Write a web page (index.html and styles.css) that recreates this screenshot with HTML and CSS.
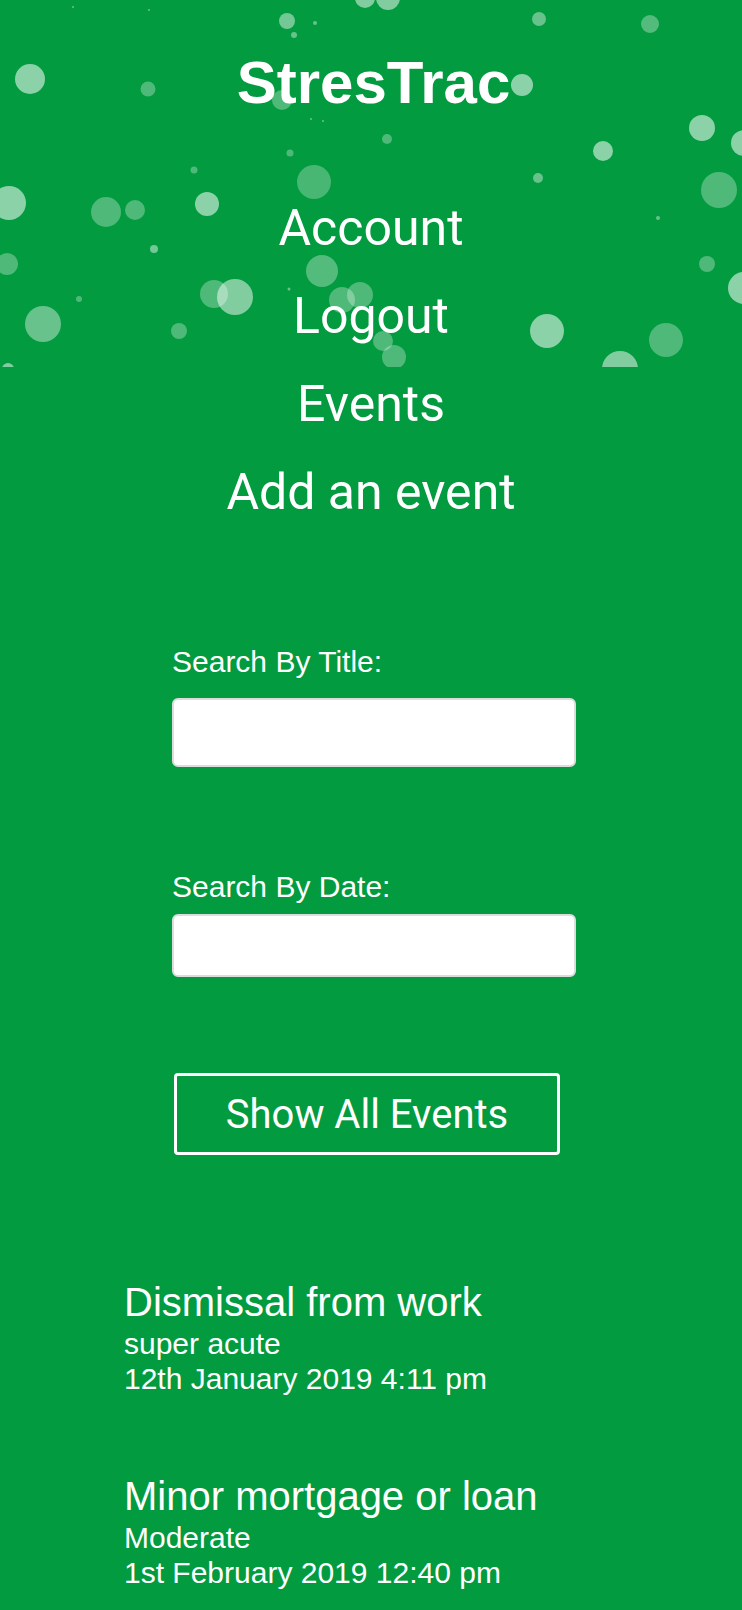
FILE: index.html
```html
<!DOCTYPE html>
<html lang="en">
<head>
<meta charset="utf-8">
<title>StresTrac</title>
<link rel="stylesheet" href="styles.css">
</head>
<body>
<header class="hero">
  <svg class="particles" width="742" height="367" viewBox="0 0 742 367" aria-hidden="true">
    <g fill="#fff">
      <circle cx="287" cy="21" r="8" fill-opacity="0.45"/>
      <circle cx="315" cy="23" r="2" fill-opacity="0.4"/>
      <circle cx="294" cy="35" r="3" fill-opacity="0.4"/>
      <circle cx="30" cy="79" r="15" fill-opacity="0.55"/>
      <circle cx="148" cy="89" r="7.5" fill-opacity="0.3"/>
      <circle cx="282" cy="100" r="10" fill-opacity="0.3"/>
      <circle cx="290" cy="153" r="3.5" fill-opacity="0.3"/>
      <circle cx="194" cy="170" r="3.5" fill-opacity="0.3"/>
      <circle cx="314" cy="182" r="17" fill-opacity="0.28"/>
      <circle cx="365" cy="-2" r="10" fill-opacity="0.5"/>
      <circle cx="388" cy="-2" r="12" fill-opacity="0.5"/>
      <circle cx="73" cy="7" r="1" fill-opacity="0.4"/>
      <circle cx="149" cy="10" r="1" fill-opacity="0.4"/>
      <circle cx="311" cy="119" r="1" fill-opacity="0.4"/>
      <circle cx="323" cy="121" r="1" fill-opacity="0.4"/>
      <circle cx="539" cy="19" r="7" fill-opacity="0.4"/>
      <circle cx="650" cy="24" r="9" fill-opacity="0.32"/>
      <circle cx="522" cy="85" r="11" fill-opacity="0.55"/>
      <circle cx="387" cy="139" r="5" fill-opacity="0.3"/>
      <circle cx="702" cy="128" r="13" fill-opacity="0.55"/>
      <circle cx="603" cy="151" r="10" fill-opacity="0.55"/>
      <circle cx="538" cy="178" r="5" fill-opacity="0.4"/>
      <circle cx="744" cy="143" r="13" fill-opacity="0.55"/>
      <circle cx="719" cy="190" r="18" fill-opacity="0.3"/>
      <circle cx="9" cy="203" r="17" fill-opacity="0.55"/>
      <circle cx="106" cy="212" r="15" fill-opacity="0.3"/>
      <circle cx="135" cy="210" r="10" fill-opacity="0.3"/>
      <circle cx="207" cy="204" r="12" fill-opacity="0.55"/>
      <circle cx="154" cy="249" r="4" fill-opacity="0.45"/>
      <circle cx="7" cy="264" r="11" fill-opacity="0.3"/>
      <circle cx="322" cy="271" r="16" fill-opacity="0.32"/>
      <circle cx="79" cy="299" r="3" fill-opacity="0.3"/>
      <circle cx="214" cy="294" r="14" fill-opacity="0.3"/>
      <circle cx="235" cy="297" r="18" fill-opacity="0.5"/>
      <circle cx="289" cy="289" r="1.5" fill-opacity="0.4"/>
      <circle cx="342" cy="300" r="13" fill-opacity="0.3"/>
      <circle cx="360" cy="295" r="13" fill-opacity="0.3"/>
      <circle cx="43" cy="324" r="18" fill-opacity="0.4"/>
      <circle cx="179" cy="331" r="8" fill-opacity="0.3"/>
      <circle cx="8" cy="369" r="6" fill-opacity="0.5"/>
      <circle cx="658" cy="218" r="2" fill-opacity="0.4"/>
      <circle cx="707" cy="264" r="8" fill-opacity="0.3"/>
      <circle cx="744" cy="288" r="16" fill-opacity="0.55"/>
      <circle cx="547" cy="331" r="17" fill-opacity="0.55"/>
      <circle cx="666" cy="340" r="17" fill-opacity="0.3"/>
      <circle cx="620" cy="369" r="18" fill-opacity="0.5"/>
      <circle cx="383" cy="341" r="10" fill-opacity="0.3"/>
      <circle cx="394" cy="357" r="12" fill-opacity="0.3"/>
    </g>
  </svg>
  <h1 class="brand">StresTrac</h1>
  <nav class="nav">
    <a class="nav-link" href="#">Account</a>
    <a class="nav-link" href="#">Logout</a>
    <a class="nav-link" href="#">Events</a>
    <a class="nav-link" href="#">Add an event</a>
  </nav>
</header>

<main class="content">
  <form class="search">
    <label class="search-label" for="title">Search By Title:</label>
    <input class="search-input search-input--title" id="title" type="text">
    <label class="search-label search-label--date" for="date">Search By Date:</label>
    <input class="search-input search-input--date" id="date" type="text">
  </form>

  <button class="show-all" type="button">Show All Events</button>

  <ul class="events">
    <li class="event">
      <h2 class="event-title">Dismissal from work</h2>
      <p class="event-meta">super acute</p>
      <p class="event-meta">12th January 2019 4:11 pm</p>
    </li>
    <li class="event">
      <h2 class="event-title">Minor mortgage or loan</h2>
      <p class="event-meta">Moderate</p>
      <p class="event-meta">1st February 2019 12:40 pm</p>
    </li>
  </ul>
</main>
</body>
</html>
```

FILE: styles.css
```css
html, body {
  margin: 0;
  padding: 0;
}

body {
  background: #029b3f;
  color: #fff;
  font-family: "Liberation Sans", Arial, sans-serif;
  min-height: 1610px;
}

.hero {
  position: relative;
  padding-top: 49px;
}

.particles {
  position: absolute;
  top: 0;
  left: 0;
  display: block;
}

.brand {
  position: relative;
  margin: 0;
  font-family: "Liberation Sans", Arial, sans-serif;
  font-weight: 700;
  font-size: 60px;
  line-height: 68px;
  text-align: center;
  padding-left: 5px;
}

.nav {
  position: relative;
  margin-top: 67px;
  display: flex;
  flex-direction: column;
  align-items: center;
}

.nav-link {
  display: block;
  font-family: Roboto, "Liberation Sans", sans-serif;
  font-size: 50px;
  line-height: 88px;
  color: #fff;
  text-decoration: none;
}

.content {
  display: flex;
  flex-direction: column;
}

.search {
  display: flex;
  flex-direction: column;
  width: 404px;
  margin: 109px 0 0 172px;
}

.search-label {
  font-size: 30px;
  line-height: 34px;
}

.search-label--date {
  margin-top: 103px;
}

.search-input {
  box-sizing: border-box;
  width: 404px;
  margin: 19px 0 0;
  background: #fff;
  border: 2px solid #dcdcdc;
  border-radius: 6px;
  font-size: 24px;
  padding: 0 10px;
  outline: none;
}

.search-input--title {
  height: 69px;
}

.search-input--date {
  margin-top: 10px;
  height: 63px;
}

.show-all {
  box-sizing: border-box;
  width: 386px;
  height: 82px;
  margin: 96px 0 0 174px;
  background: transparent;
  border: 3px solid #fff;
  border-radius: 4px;
  color: #fff;
  font-family: Roboto, "Liberation Sans", sans-serif;
  font-size: 40px;
  padding: 0;
}

.events {
  list-style: none;
  margin: 124px 0 0 124px;
  padding: 0;
  display: flex;
  flex-direction: column;
  gap: 77px;
}

.event-title {
  margin: 0;
  font-weight: 400;
  font-size: 40px;
  line-height: 47px;
}

.event-meta {
  margin: 0;
  font-size: 30px;
  line-height: 35px;
}
```
